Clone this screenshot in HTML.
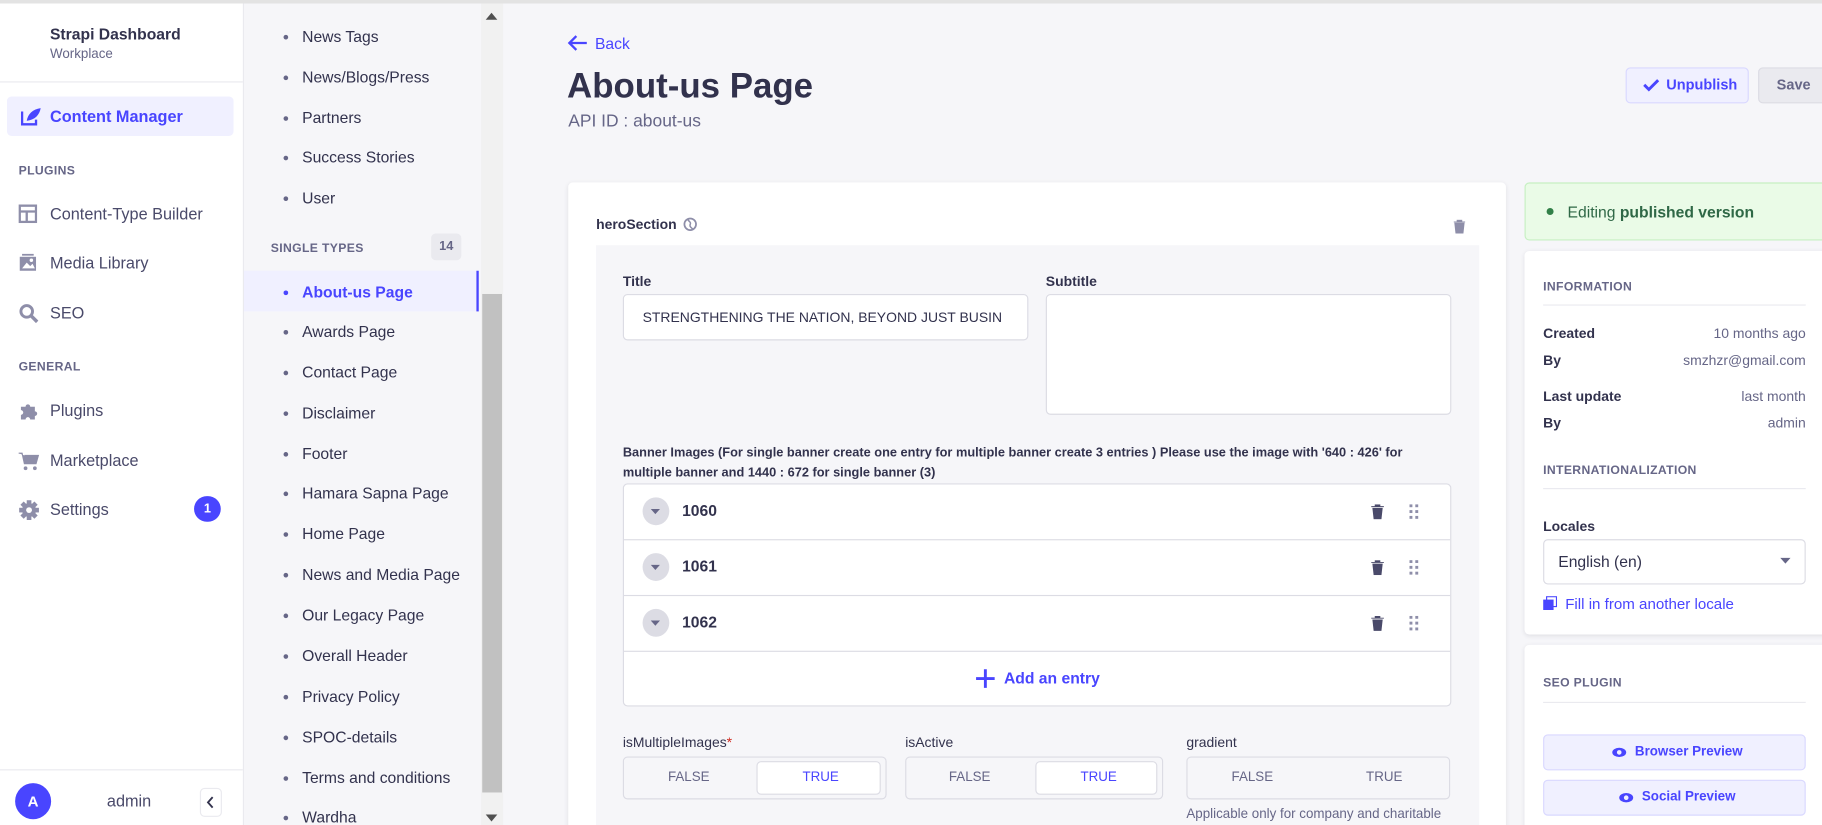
<!DOCTYPE html>
<html><head><meta charset="utf-8">
<style>
*{box-sizing:border-box;margin:0;padding:0}
html,body{width:1822px;height:825px;overflow:hidden;background:#f6f6f9}
body{font-family:"Liberation Sans",Arial,sans-serif;color:#32324d}
#w{position:absolute;left:0;top:0;width:1568px;height:710px;transform:scale(1.16199);transform-origin:0 0;background:#f6f6f9;overflow:hidden}
.a{position:absolute}
.t{position:absolute;white-space:nowrap}
.nav{font-size:14px;color:#4a4a6a}
.sec{font-size:10.5px;font-weight:bold;color:#666687;letter-spacing:.3px}
.li{font-size:13.5px;color:#32324d}
.dot{position:absolute;width:4px;height:4px;border-radius:2px;background:#666687}
.lbl{font-size:12px;font-weight:bold;color:#32324d}
.box{position:absolute;background:#fff;border:1px solid #dcdce4;border-radius:4px}
.k{font-size:12px;font-weight:bold;color:#32324d}
.v{font-size:12px;color:#666687;text-align:right}
</style></head><body><div id="w">
<div class="a" style="left:0;top:0;width:1568px;height:3px;background:#e3e3e3"></div>
<!-- sidebar -->
<div class="a" style="left:0;top:3px;width:210px;height:707px;background:#fff;border-right:1px solid #eaeaef"></div>
<div class="t" style="left:43px;top:22px;font-size:13.5px;font-weight:bold">Strapi Dashboard</div>
<div class="t" style="left:43px;top:41px;font-size:11.5px;color:#666687">Workplace</div>
<div class="a" style="left:0;top:70px;width:209px;height:1px;background:#eaeaef"></div>
<div class="a" style="left:6px;top:83px;width:195px;height:34px;background:#f0f0ff;border-radius:4px"></div>
<svg class="a" style="left:18px;top:92px" width="18" height="16" viewBox="0 0 18 16"><path d="M1 4v11h12v-4" fill="none" stroke="#4945ff" stroke-width="2"/><path d="M5 12 C6 6 10 2 17 1 C16 7 12 11 5 12Z" fill="#4945ff"/></svg>
<div class="t" style="left:43px;top:92px;font-size:14px;color:#4945ff;font-weight:bold">Content Manager</div>
<div class="t sec" style="left:16px;top:141px">PLUGINS</div>
<svg class="a" style="left:16px;top:176px" width="16" height="16"><rect x="1" y="1" width="14" height="14" fill="none" stroke="#8e8ea9" stroke-width="2"/><path d="M1 6h14M7 6v9" stroke="#8e8ea9" stroke-width="2"/></svg>
<div class="t nav" style="left:43px;top:176px">Content-Type Builder</div>
<svg class="a" style="left:16px;top:218px" width="16" height="16"><rect x="1" y="3" width="14" height="12" fill="#8e8ea9"/><path d="M3 13l4-5 3 3 2-2 2 4z" fill="#fff"/><circle cx="11" cy="6" r="1.5" fill="#fff"/><rect x="3" y="0.5" width="10" height="1.5" fill="#8e8ea9"/></svg>
<div class="t nav" style="left:43px;top:218px">Media Library</div>
<svg class="a" style="left:16px;top:261px" width="17" height="17"><circle cx="7" cy="7" r="5" fill="none" stroke="#8e8ea9" stroke-width="2.5"/><path d="M11 11l5 5" stroke="#8e8ea9" stroke-width="3"/></svg>
<div class="t nav" style="left:43px;top:261px">SEO</div>
<div class="t sec" style="left:16px;top:310px">GENERAL</div>
<svg class="a" style="left:16px;top:344px" width="18" height="18"><path d="M2 6h4a2 2 0 1 1 4 0h4v4a2 2 0 1 1 0 4v3H10a2 2 0 1 0-4 0H2v-4a2 2 0 1 0 0-4z" fill="#8e8ea9"/></svg>
<div class="t nav" style="left:43px;top:345px">Plugins</div>
<svg class="a" style="left:16px;top:388px" width="18" height="18"><path d="M0 2h3l2 9h10l2-7H5" fill="#8e8ea9" stroke="#8e8ea9"/><circle cx="6" cy="15" r="1.6" fill="#8e8ea9"/><circle cx="14" cy="15" r="1.6" fill="#8e8ea9"/></svg>
<div class="t nav" style="left:43px;top:388px">Marketplace</div>
<svg class="a" style="left:16px;top:430px" width="18" height="18" viewBox="0 0 18 18"><g fill="#8e8ea9"><circle cx="9" cy="9" r="6"/><rect x="7" y="0.5" width="4" height="17"/><rect x="0.5" y="7" width="17" height="4"/><rect x="7" y="0.5" width="4" height="17" transform="rotate(45 9 9)"/><rect x="7" y="0.5" width="4" height="17" transform="rotate(-45 9 9)"/></g><circle cx="9" cy="9" r="2.5" fill="#fff"/></svg>
<div class="t nav" style="left:43px;top:430px">Settings</div>
<div class="a" style="left:167px;top:427px;width:23px;height:22px;border-radius:11px;background:#4945ff;color:#fff;font-size:11px;font-weight:bold;text-align:center;line-height:22px">1</div>
<div class="a" style="left:0;top:662px;width:209px;height:1px;background:#eaeaef"></div>
<div class="a" style="left:13px;top:674px;width:31px;height:31px;border-radius:50%;background:#4945ff;color:#fff;font-size:13px;font-weight:bold;text-align:center;line-height:31px">A</div>
<div class="t" style="left:92px;top:681px;font-size:14px;color:#4a4a6a">admin</div>
<div class="a" style="left:172px;top:678px;width:19px;height:25px;border:1px solid #eaeaef;border-radius:4px;background:#fff"></div>
<svg class="a" style="left:177px;top:685px" width="9" height="11"><path d="M6 1L2 5.5 6 10" fill="none" stroke="#32324d" stroke-width="1.6"/></svg>
<!-- second panel -->
<div class="a" style="left:210px;top:3px;width:204px;height:707px;background:#f6f6f9"></div>
<div class="a" style="left:414px;top:3px;width:19px;height:707px;background:#f1f1f1"></div>
<div class="a" style="left:415px;top:253px;width:17px;height:429px;background:#c1c1c1"></div>
<svg class="a" style="left:417px;top:10px" width="12" height="8"><path d="M1 7L6 1 11 7z" fill="#505050"/></svg>
<svg class="a" style="left:417px;top:700px" width="12" height="8"><path d="M1 1L6 7 11 1z" fill="#505050"/></svg>
<div class="a" style="left:210px;top:233px;width:202px;height:35px;background:#f0f0ff;border-right:2px solid #4945ff"></div>
<div class="t sec" style="left:233px;top:208px">SINGLE TYPES</div>
<div class="a" style="left:371px;top:201px;width:26px;height:23px;border-radius:4px;background:#eaeaef;font-size:11px;font-weight:bold;color:#666687;text-align:center;line-height:23px">14</div>
<div id="items"></div>
<!-- main -->
<svg class="a" style="left:488px;top:29px" width="18" height="16"><path d="M8 2L2 8l6 6M2 8h15" fill="none" stroke="#4945ff" stroke-width="2"/></svg>
<div class="t" style="left:512px;top:30px;font-size:13.5px;color:#4945ff">Back</div>
<div class="t" style="left:488px;top:58px;font-size:30px;font-weight:bold;color:#32324d">About-us Page</div>
<div class="t" style="left:489px;top:96px;font-size:15px;color:#666687">API ID : about-us</div>
<div class="a" style="left:1399px;top:58px;width:106px;height:31px;background:#f0f0ff;border:1px solid #d9d8ff;border-radius:4px"></div>
<svg class="a" style="left:1414px;top:68px" width="14" height="11"><path d="M1 5l4 4 8-8" fill="none" stroke="#4945ff" stroke-width="2.5"/></svg>
<div class="t" style="left:1434px;top:66px;font-size:12.5px;font-weight:bold;color:#4945ff">Unpublish</div>
<div class="a" style="left:1513px;top:58px;width:70px;height:31px;background:#eaeaef;border:1px solid #dcdce4;border-radius:4px"></div>
<div class="t" style="left:1529px;top:66px;font-size:12.5px;font-weight:bold;color:#666687">Save</div>
<div class="a" style="left:489px;top:157px;width:807px;height:570px;background:#fff;border-radius:4px;box-shadow:0 1px 4px rgba(33,33,52,.1)"></div>
<div class="t" style="left:513px;top:186px;font-size:12px;font-weight:bold">heroSection</div>
<svg class="a" style="left:588px;top:187px" width="12" height="12"><circle cx="6" cy="6" r="5" fill="none" stroke="#8e8ea9" stroke-width="1.5"/><path d="M4 2c1 2 3 2 2 4s1 3 2 4" fill="none" stroke="#8e8ea9" stroke-width="1.3"/></svg>
<svg class="a" style="left:1251px;top:189px" width="10" height="12"><path d="M0 2h10M3 2V0.5h4V2M1 3h8l-1 9H2z" fill="#8e8ea9" stroke="#8e8ea9" stroke-width=".8"/></svg>
<div class="a" style="left:513px;top:211px;width:760px;height:520px;background:#f6f6f9"></div>
<div class="t lbl" style="left:536px;top:235px">Title</div>
<div class="box" style="left:536px;top:253px;width:349px;height:40px"></div>
<div class="t" style="left:553px;top:266px;font-size:12px;color:#32324d">STRENGTHENING THE NATION, BEYOND JUST BUSIN</div>
<div class="t lbl" style="left:900px;top:235px">Subtitle</div>
<div class="box" style="left:900px;top:253px;width:349px;height:104px"></div>
<div class="a lbl" style="left:536px;top:382px;width:700px;line-height:16.5px;font-size:11px">Banner Images (For single banner create one entry for multiple banner create 3 entries ) Please use the image with '640 : 426' for multiple banner and 1440 : 672 for single banner (3)</div>
<div class="box" style="left:536px;top:416px;width:713px;height:192px"></div>
<div id="rows"></div>
<div class="a" style="left:537px;top:560px;width:711px;height:1px;background:#dcdce4"></div>
<svg class="a" style="left:839px;top:575px" width="18" height="18"><path d="M9 1v16M1 9h16" stroke="#4945ff" stroke-width="2.5"/></svg>
<div class="t" style="left:864px;top:576px;font-size:13.5px;font-weight:bold;color:#4945ff">Add an entry</div>
<div class="t" style="left:536px;top:632px;font-size:12px;color:#32324d">isMultipleImages<span style="color:#d02b20">*</span></div>
<div class="t" style="left:779px;top:632px;font-size:12px;color:#32324d">isActive</div>
<div class="t" style="left:1021px;top:632px;font-size:12px;color:#32324d">gradient</div>
<div id="tg"></div>
<div class="t" style="left:1021px;top:695px;font-size:11.5px;color:#666687">Applicable only for company and charitable</div>
<!-- right -->
<div class="a" style="left:1312px;top:157px;width:270px;height:50px;background:#eafbe7;border:1px solid #c6f0c2;border-radius:4px"></div>
<div class="a" style="left:1331px;top:179px;width:6px;height:6px;border-radius:3px;background:#328048"></div>
<div class="t" style="left:1349px;top:175px;font-size:13.5px;color:#2f6846">Editing <b>published version</b></div>
<div class="a" style="left:1312px;top:216px;width:270px;height:330px;background:#fff;border-radius:4px;box-shadow:0 1px 4px rgba(33,33,52,.1)"></div>
<div class="t sec" style="left:1328px;top:241px">INFORMATION</div>
<div class="a" style="left:1328px;top:262px;width:226px;height:1px;background:#eaeaef"></div>
<div class="t k" style="left:1328px;top:280px">Created</div><div class="t v" style="right:14px;top:280px">10 months ago</div>
<div class="t k" style="left:1328px;top:303px">By</div><div class="t v" style="right:14px;top:303px">smzhzr@gmail.com</div>
<div class="t k" style="left:1328px;top:334px">Last update</div><div class="t v" style="right:14px;top:334px">last month</div>
<div class="t k" style="left:1328px;top:357px">By</div><div class="t v" style="right:14px;top:357px">admin</div>
<div class="t sec" style="left:1328px;top:399px">INTERNATIONALIZATION</div>
<div class="a" style="left:1328px;top:420px;width:226px;height:1px;background:#eaeaef"></div>
<div class="t k" style="left:1328px;top:446px">Locales</div>
<div class="box" style="left:1328px;top:464px;width:226px;height:39px"></div>
<div class="t" style="left:1341px;top:476px;font-size:13.5px;color:#32324d">English (en)</div>
<svg class="a" style="left:1532px;top:480px" width="9" height="6"><path d="M0 0h9L4.5 5z" fill="#666687"/></svg>
<svg class="a" style="left:1328px;top:513px" width="12" height="12"><rect x="3" y="0.5" width="8.5" height="8.5" fill="none" stroke="#4945ff"/><rect x="0" y="3" width="9" height="9" fill="#4945ff"/></svg>
<div class="t" style="left:1347px;top:512px;font-size:13px;color:#4945ff">Fill in from another locale</div>
<div class="a" style="left:1312px;top:555px;width:270px;height:170px;background:#fff;border-radius:4px;box-shadow:0 1px 4px rgba(33,33,52,.1)"></div>
<div class="t sec" style="left:1328px;top:582px">SEO PLUGIN</div>
<div class="a" style="left:1328px;top:604px;width:226px;height:1px;background:#eaeaef"></div>
<div class="a" style="left:1328px;top:632px;width:226px;height:31px;background:#f0f0ff;border:1px solid #d9d8ff;border-radius:4px"></div>
<div class="t" style="left:1407px;top:641px;font-size:11.5px;font-weight:bold;color:#4945ff">Browser Preview</div>
<div class="a" style="left:1328px;top:671px;width:226px;height:31px;background:#f0f0ff;border:1px solid #d9d8ff;border-radius:4px"></div>
<div class="t" style="left:1413px;top:680px;font-size:11.5px;font-weight:bold;color:#4945ff">Social Preview</div>
<svg class="a" style="left:1387px;top:643px" width="13" height="9"><ellipse cx="6.5" cy="4.5" rx="6" ry="4" fill="#4945ff"/><circle cx="6.5" cy="4.5" r="2" fill="#f0f0ff"/></svg>
<svg class="a" style="left:1393px;top:682px" width="13" height="9"><ellipse cx="6.5" cy="4.5" rx="6" ry="4" fill="#4945ff"/><circle cx="6.5" cy="4.5" r="2" fill="#f0f0ff"/></svg>
</div>
<script>
var it=[["News Tags",31],["News/Blogs/Press",66],["Partners",101],["Success Stories",135],["User",170],["About-us Page",251,1],["Awards Page",285],["Contact Page",320],["Disclaimer",355],["Footer",390],["Hamara Sapna Page",424],["Home Page",459],["News and Media Page",494],["Our Legacy Page",529],["Overall Header",564],["Privacy Policy",599],["SPOC-details",634],["Terms and conditions",669],["Wardha",703]];
var h="";it.forEach(function(x){var c=x[2]?"color:#4945ff;font-weight:bold;":"";h+='<div class="dot" style="left:244px;top:'+(x[1]-1)+'px;'+(x[2]?'background:#4945ff':'')+'"></div><div class="t li" style="left:260px;top:'+(x[1]-7)+'px;'+c+'">'+x[0]+'</div>';});
document.getElementById("items").outerHTML=h;
var r="";[["1060",440],["1061",488],["1062",536]].forEach(function(x,i){var y=x[1];
if(i>0)r+='<div class="a" style="left:537px;top:'+(y-24)+'px;width:711px;height:1px;background:#dcdce4"></div>';
r+='<div class="a" style="left:553px;top:'+(y-12)+'px;width:23px;height:24px;border-radius:50%;background:#dcdce4"></div><svg class="a" style="left:560px;top:'+(y-2)+'px" width="8" height="5"><path d="M0 0h8L4 4.5z" fill="#666687"/></svg><div class="t" style="left:587px;top:'+(y-8)+'px;font-size:13.5px;font-weight:bold">'+x[0]+'</div><svg class="a" style="left:1180px;top:'+(y-6)+'px" width="11" height="13"><path d="M0 2h11M3.5 2V0.5h4V2M1.5 3.5h8l-1 9h-6z" fill="#4a4a6a" stroke="#4a4a6a" stroke-width=".8"/></svg><svg class="a" style="left:1213px;top:'+(y-6)+'px" width="8" height="13"><g fill="#8e8ea9"><rect x="0" y="0" width="2.5" height="2.5"/><rect x="5" y="0" width="2.5" height="2.5"/><rect x="0" y="5" width="2.5" height="2.5"/><rect x="5" y="5" width="2.5" height="2.5"/><rect x="0" y="10" width="2.5" height="2.5"/><rect x="5" y="10" width="2.5" height="2.5"/></g></svg>';});
document.getElementById("rows").outerHTML=r;
var g="";[[536,227,1],[779,222,1],[1021,227,0]].forEach(function(x){var L=x[0],W=x[1],hw=W/2;
g+='<div class="a" style="left:'+L+'px;top:651px;width:'+W+'px;height:37px;border:1px solid #dcdce4;border-radius:4px;background:#f6f6f9"></div>';
if(x[2])g+='<div class="a" style="left:'+(L+hw+1)+'px;top:655px;width:'+(hw-6)+'px;height:29px;border:1px solid #dcdce4;border-radius:4px;background:#fff"></div>';
g+='<div class="t" style="left:'+L+'px;top:663px;width:'+hw+'px;text-align:center;font-size:11.5px;color:#666687">FALSE</div><div class="t" style="left:'+(L+hw)+'px;top:663px;width:'+hw+'px;text-align:center;font-size:11.5px;color:'+(x[2]?'#4945ff':'#666687')+'">TRUE</div>';});
document.getElementById("tg").outerHTML=g;
</script>
</body></html>
